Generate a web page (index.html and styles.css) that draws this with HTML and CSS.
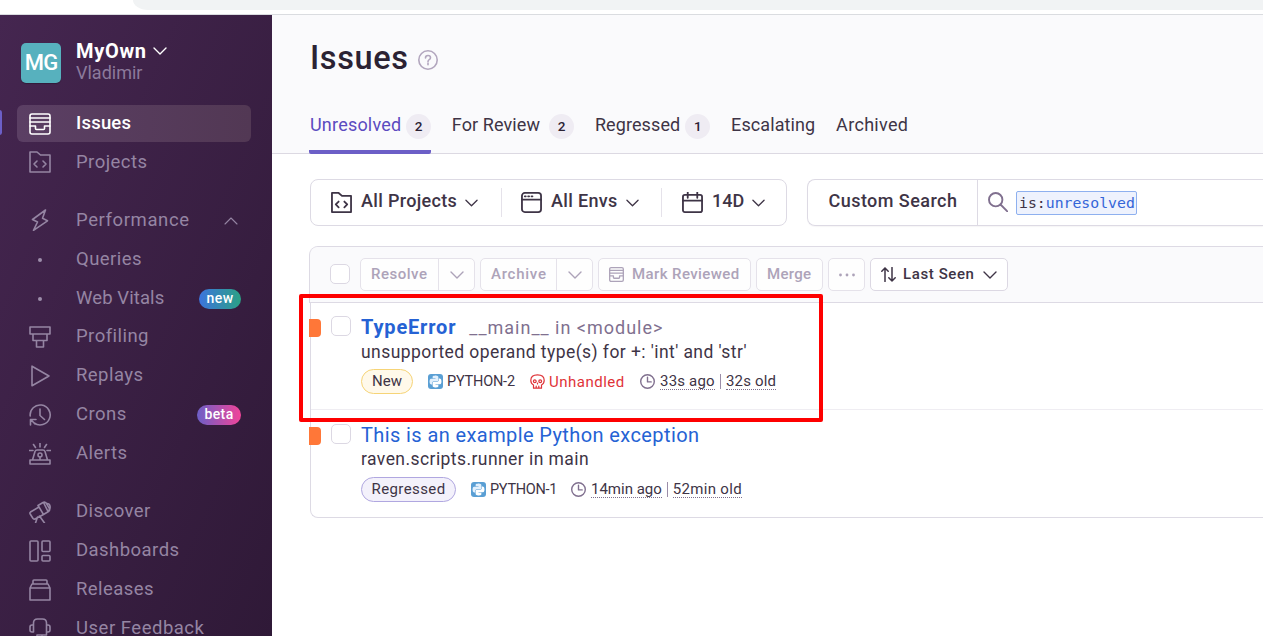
FILE: index.html
```
<!DOCTYPE html>
<html lang="en">
<head>
<meta charset="utf-8">
<title>Issues</title>
<link rel="stylesheet" href="styles.css">
</head>
<body>
<svg class="defs" aria-hidden="true">
  <defs>
    <symbol id="chevron" viewBox="0 0 14 8"><path d="M1 1l6 6 6-6"/></symbol>
    <symbol id="inbox" viewBox="0 0 22 22"><rect x="1" y="1" width="20" height="20" rx="2"/><path d="M1 5h20M1 9h20M1 13h5.500v2.500q0 1 1 1h7q1 0 1-1V13H21"/></symbol>
    <symbol id="code-folder" viewBox="0 0 22 22"><path d="M1 1h7l3.500 3H21v17H1zM8 10l-3 3 3 3M14 10l3 3-3 3"/></symbol>
    <path id="snake" d="M14.25.18l.9.2.73.26.59.3.45.32.34.34.25.34.16.33.1.3.04.26.02.2-.01.13V8.500l-.05.63-.13.55-.21.46-.26.38-.3.31-.33.25-.35.19-.35.14-.33.1-.3.07-.26.04-.21.02H8.770l-.69.05-.59.14-.5.22-.41.27-.33.32-.27.35-.2.36-.15.37-.1.35-.07.32-.04.27-.02.21v3.060H3.170l-.21-.03-.28-.07-.32-.12-.35-.18-.36-.26-.36-.36-.35-.46-.32-.59-.28-.73-.21-.88-.14-1.050-.05-1.230.06-1.220.16-1.040.24-.87.32-.71.36-.57.4-.44.42-.33.42-.24.4-.16.36-.1.32-.05.24-.01h.16l.06.01h8.160v-.83H6.180l-.01-2.750-.02-.37.05-.34.11-.31.17-.28.25-.26.31-.23.38-.2.44-.18.51-.15.58-.12.64-.1.71-.06.77-.04.84-.02 1.270.05z"/>
    <symbol id="python" viewBox="0 0 15 15"><rect width="15" height="15" rx="3" fill="#5a9fd4" stroke="none"/><g transform="translate(1.600 1.600) scale(.492)" stroke="none"><use href="#snake" fill="#e2f0fd"/><use href="#snake" transform="rotate(180 12 12)" fill="#fff"/></g></symbol>
    <symbol id="clock" viewBox="0 0 15 15"><circle cx="7.500" cy="7.500" r="6.800"/><path d="M7.500 3.300v4.600h3.700"/></symbol>
  </defs>
</svg>

<div class="browser-strip"><div class="address-bar"></div></div>

<div class="app">
  <nav class="sidebar">
    <div class="org">
      <div class="avatar">MG</div>
      <div class="org-text">
        <div class="org-name"><span>MyOwn</span><svg class="chev"><use href="#chevron"/></svg></div>
        <div class="org-user">Vladimir</div>
      </div>
    </div>

    <div class="group">
      <a class="item active"><svg class="ic"><use href="#inbox"/></svg><span class="ls-20">Issues</span></a>
      <a class="item"><svg class="ic"><use href="#code-folder"/></svg><span>Projects</span></a>
    </div>
    <div class="group">
      <a class="item"><svg class="ic" viewBox="0 0 22 22"><path d="M16.500 1L3.500 10.500l5 2.500-4 8.300 14-9.500-5-2.500z"/></svg><span class="ls-60">Performance</span><svg class="chev up"><use href="#chevron"/></svg></a>
      <a class="item"><i class="dot"></i><span>Queries</span></a>
      <a class="item"><i class="dot"></i><span class="ls-10">Web Vitals</span><b class="badge new">new</b></a>
      <a class="item"><svg class="ic" viewBox="0 0 22 22"><path d="M1 1h20v7H1zM4 8h14v6.500H4zM7.500 14.500h7V21h-7z"/></svg><span>Profiling</span></a>
      <a class="item"><svg class="ic" viewBox="0 0 22 22"><path d="M3 1.200v19.600L20 11z"/></svg><span>Replays</span></a>
      <a class="item"><svg class="ic" viewBox="0 0 22 22"><path d="M1.200 12a10 10 0 1 1 4 7M1.500 21v-5.500H7M2 15.800L6 20M11 5v6.500l4.500 4"/></svg><span>Crons</span><b class="badge beta">beta</b></a>
      <a class="item"><svg class="ic" viewBox="0 0 22 22"><path d="M1 17h20v4H1zM3.500 17L6 8.500Q6.500 7 8 7h6q1.500 0 2 1.500L18.500 17M11 0v4M4.500 1.500l2 3M17.500 1.500l-2 3M0 7.500h4M18 7.500h4M11 13.500V17"/><circle cx="11" cy="12" r="2"/></svg><span>Alerts</span></a>
    </div>
    <div class="group">
      <a class="item"><svg class="ic" viewBox="0 0 22 22"><path d="M1.500 11L10 6l4.500 7.500-8.500 4.500q-1.500.5-2-.5L1.200 13q-.7-1.200.3-2zM10 6l-1-1.500L14 1.500q2-1 3.300.8l3 5q1 2-.8 3.200L14.500 13.500M14.500 1.500l4.500 9M18 2.500q2.500 0 3 2.500t-1 4M8.500 16L6.500 22M10.500 15l5 7"/></svg><span>Discover</span></a>
      <a class="item"><svg class="ic" viewBox="0 0 22 22"><rect x="1" y="1" width="8" height="20" rx="1"/><rect x="13" y="1" width="8" height="10.500" rx="1"/><rect x="13" y="15.500" width="8" height="5.500" rx="1"/></svg><span>Dashboards</span></a>
      <a class="item"><svg class="ic" viewBox="0 0 22 22"><path d="M1 9h20v12H1zM1 9l2-4h16l2 4M4 5V2q0-1 1-1h12q1 0 1 1v3"/></svg><span>Releases</span></a>
      <a class="item"><svg class="ic" viewBox="0 0 22 22"><path d="M4.500 14V5q0-4 4-4h5q4 0 4 4v9M4.500 7H3Q1 7 1 9v3q0 2 2 2h1.500M17.500 7H19q2 0 2 2v3q0 2-2 2h-1.500zM17.500 14v3h-6M8 17h5v3H8z"/></svg><span class="ls-50">User Feedback</span></a>
    </div>
  </nav>

  <main class="main">
    <header class="page-head">
      <div class="title-row">
        <h1>Issues</h1>
        <svg class="help" viewBox="0 0 20 20"><circle cx="10" cy="10" r="9.200"/><path d="M7.500 8q0-2.500 2.500-2.500T12.500 7.700q0 1.200-1.300 1.900Q10 10.300 10 11.700M10 13.300v1.500"/></svg>
      </div>
      <div class="tabs">
        <a class="tab on"><span class="ls-20">Unresolved</span><b class="count">2</b></a>
        <a class="tab review"><span class="ls-10">For Review</span><b class="count">2</b></a>
        <a class="tab"><span class="ls-10">Regressed</span><b class="count">1</b></a>
        <a class="tab"><span class="ls-10">Escalating</span></a>
        <a class="tab"><span class="ls-30">Archived</span></a>
      </div>
    </header>

    <section class="filters">
      <div class="page-filters">
        <a class="filter projects"><svg class="fi"><use href="#code-folder"/></svg><span>All Projects</span><svg class="chev"><use href="#chevron"/></svg></a>
        <a class="filter envs"><svg class="fi" viewBox="0 0 22 22"><rect x="1" y="1" width="20" height="20" rx="3"/><path d="M1 8h20M4 4.500h1M7.500 4.500h1M11 4.500h1"/></svg><span>All Envs</span><svg class="chev"><use href="#chevron"/></svg></a>
        <a class="filter dates"><svg class="fi" viewBox="0 0 22 22"><rect x="1" y="3" width="20" height="18" rx="2"/><path d="M1 9h20M6 0v6M16 0v6"/></svg><span class="ls-0">14D</span><svg class="chev"><use href="#chevron"/></svg></a>
      </div>
      <div class="search">
        <div class="search-name">Custom Search</div>
        <div class="search-input">
          <svg class="mag" viewBox="0 0 20 20"><circle cx="7.700" cy="7.700" r="6.700"/><path d="M12.500 12.500l7 7"/></svg>
          <code class="token">is:<em>unresolved</em></code>
        </div>
      </div>
    </section>

    <section class="panel">
      <div class="toolbar">
        <i class="check"></i>
        <div class="btn split resolve"><span class="ls-50">Resolve</span><u><svg class="chev"><use href="#chevron"/></svg></u></div>
        <div class="btn split archive"><span class="ls-70">Archive</span><u><svg class="chev"><use href="#chevron"/></svg></u></div>
        <div class="btn mark"><svg class="bi"><use href="#inbox"/></svg><span>Mark Reviewed</span></div>
        <div class="btn merge"><span class="ls-30">Merge</span></div>
        <div class="btn more"><svg viewBox="0 0 16 4"><circle cx="1.500" cy="2" r="1.400"/><circle cx="8" cy="2" r="1.400"/><circle cx="14.500" cy="2" r="1.400"/></svg></div>
        <div class="btn sort"><svg class="arrows" viewBox="0 0 15 15"><path d="M4 14.500V1M.8 4.300L4 1l3.200 3.300M11 .5V14M7.800 10.700L11 14l3.200-3.300"/></svg><span class="ls-60">Last Seen</span><svg class="chev"><use href="#chevron"/></svg></div>
      </div>

      <article class="issue">
        <i class="level"></i><i class="check"></i>
        <div class="body">
          <div class="heading"><strong>TypeError</strong><span class="culprit">__main__ in &lt;module&gt;</span></div>
          <div class="message">unsupported operand type(s) for +: 'int' and 'str'</div>
          <div class="meta">
            <span class="pill fresh">New</span>
            <svg class="mi"><use href="#python"/></svg><span class="short">PYTHON-2</span>
            <svg class="mi skull" viewBox="0 0 15 15"><path d="M3.500 11Q.8 9.500.8 6.500.8.800 7.500.8t6.700 5.700q0 3-2.700 4.500v3.200h-8zM6.200 12v2M8.800 12v2M7.500 9v1"/><circle cx="4.800" cy="7.300" r="1.400"/><circle cx="10.200" cy="7.300" r="1.400"/></svg><span class="unhandled">Unhandled</span>
            <svg class="mi"><use href="#clock"/></svg><span class="time ls-20">33s ago</span><i class="bar"></i><span class="time ls-20">32s old</span>
          </div>
        </div>
      </article>

      <article class="issue second">
        <i class="level"></i><i class="check"></i>
        <div class="body">
          <div class="heading">This is an example Python exception</div>
          <div class="message">raven.scripts.runner in main</div>
          <div class="meta">
            <span class="pill regressed">Regressed</span>
            <svg class="mi"><use href="#python"/></svg><span class="short">PYTHON-1</span>
            <svg class="mi"><use href="#clock"/></svg><span class="time ls-0">14min ago</span><i class="bar"></i><span class="time ls-30">52min old</span>
          </div>
        </div>
      </article>
      <div class="highlight"></div>
    </section>
  </main>
</div>
</body>
</html>
```
FILE: styles.css
```
* { box-sizing: border-box; }
body { margin: 0; height: 636px; overflow: hidden; background: #fff; color: #3e3446; font-family: Roboto, "Liberation Sans", sans-serif; }
svg { display: block; flex: none; fill: none; stroke: currentColor; stroke-width: 1.6; stroke-linecap: round; stroke-linejoin: round; }
i, em { font-style: normal; }
u { text-decoration: none; }
.defs { position: absolute; width: 0; height: 0; }
.chev { width: 14px; height: 8px; stroke-width: 1.4; }

/* letter-spacing steps */
.ls-0 { letter-spacing: 0 !important; }
.ls-10 { letter-spacing: .1px !important; }
.ls-20 { letter-spacing: .2px !important; }
.ls-30 { letter-spacing: .31px !important; }
.ls-50 { letter-spacing: .51px !important; }
.ls-60 { letter-spacing: .6px !important; }
.ls-70 { letter-spacing: .75px !important; }

.browser-strip { height: 15px; border-bottom: 1px solid #dadce0; padding-left: 133px; }
.address-bar { height: 10px; background: #f1f3f4; border-bottom-left-radius: 18px 12px; }

.app { display: flex; height: 621px; }

/* sidebar */
.sidebar { flex: none; width: 272px; padding-top: 28px; overflow: hidden; background: linear-gradient(294deg, #2f1937 0%, #452650 100%); color: #9585a3; }
.org { display: flex; height: 62px; padding-left: 21px; }
.avatar { width: 40px; height: 40px; border-radius: 5px; background: #57b1be; color: #fff; font-size: 22px; font-weight: 500; line-height: 40px; text-align: center; letter-spacing: -.8px; box-shadow: 0 1px 1px rgba(0,0,0,.25); }
.org-text { margin: -1px 0 0 15px; }
.org-name { display: flex; align-items: center; height: 18px; font-size: 20px; font-weight: 700; letter-spacing: .68px; color: #fff; }
.org-name .chev { margin-left: 6px; margin-top: -1px; }
.org-user { margin-top: 3px; font-size: 18px; line-height: 20px; color: #8b7a9b; }
.group { margin-bottom: 21.100px; }
.item { position: relative; display: flex; align-items: center; height: 37px; margin: 0 21px 1.900px 17px; padding: 0 10px 0 12px; border-radius: 6px; font-size: 18.500px; letter-spacing: .45px; }
.item > span { margin-left: 25px; margin-top: -1.500px; }
.item .ic { width: 22px; height: 22px; }
.item.active { background: linear-gradient(90deg, #5b3f64, #523854); color: #fff; }
.item.active > span { font-weight: 500; }
.item.active::before { content: ""; position: absolute; left: -20px; top: 5px; width: 5px; height: 25px; border-radius: 3px; background: #6c5fc7; }
.item .up { margin: 2px 3px 0 auto; transform: rotate(180deg); stroke-width: 1.1; }
.dot { width: 4px; height: 4px; margin: 1px 9px 0; border-radius: 50%; background: #9d8eab; }
.badge { margin: 1px 0 0 auto; height: 20px; border-radius: 10px; color: #fff; font-size: 14px; font-weight: 500; line-height: 19px; text-align: center; letter-spacing: .4px; }
.badge.new { width: 42px; background: linear-gradient(90deg, #3c74dd, #2ba185); }
.badge.beta { width: 44px; background: linear-gradient(90deg, #6c5fc7, #f14499); }

/* page header */
.main { flex: 1; min-width: 0; }
.page-head { height: 139px; padding: 22px 0 0 38px; background: #fafafc; border-bottom: 1px solid #dcd9e2; }
.title-row { display: flex; align-items: center; height: 42px; }
h1 { margin: 0; font-size: 32.500px; font-weight: 500; line-height: 42px; letter-spacing: .6px; color: #2b2233; }
.help { width: 20px; height: 20px; margin: 3px 0 0 10px; color: #b2a6be; }
.tabs { display: flex; gap: 19.800px; margin: 24px 0 0 -1px; height: 51px; font-size: 18px; }
.tab { display: flex; align-items: flex-start; height: 51px; line-height: 44px; padding-left: 1px; }
.tab.on { width: 122px; color: #5b4bc0; border-bottom: 4px solid #6c5fc7; border-radius: 0 0 2px 2px; }
.count { width: 25px; height: 25px; margin: 11px 0 0 5px; border-radius: 50%; background: #efecf3; color: #2b2233; font-size: 13.500px; font-weight: 500; line-height: 25px; text-align: center; }
.review .count { margin-left: 9px; }

/* filters */
.filters { display: flex; gap: 20px; height: 92px; padding: 25px 0 0 38px; }
.page-filters { display: flex; width: 477px; height: 47px; padding: 8px 0; border: 1px solid #dddae4; border-radius: 8px; }
.filter { display: flex; align-items: center; padding-left: 19px; font-size: 18px; font-weight: 500; letter-spacing: .33px; }
.filter + .filter { border-left: 1px solid #e5e2ea; }
.filter span { margin: -4px 8px 0 9px; }
.filter .chev { width: 13px; }
.fi { width: 21px; height: 21px; margin-top: -1px; stroke-width: 1.9; }
.projects { width: 190px; padding-left: 20px; }
.envs { width: 160px; }
.dates { padding-left: 20px; }
.search { display: flex; flex: 1; height: 47px; border: 1px solid #dddae4; border-right: 0; border-radius: 8px 0 0 8px; box-shadow: 0 1px 1px rgba(43,34,51,.04); }
.search-name { width: 170px; padding-left: 20.500px; border-right: 1px solid #dddae4; font-size: 18px; font-weight: 500; line-height: 42px; letter-spacing: .45px; }
.search-input { display: flex; align-items: center; padding-left: 10px; }
.mag { width: 20px; height: 20px; margin-top: -1px; color: #80708f; stroke-width: 1.900; }
.token { width: 121px; height: 24px; margin: 1px 0 0 8px; border: 1px solid #8eb0ef; border-radius: 2px; background: #eef2fd; padding-left: 2px; font: 14.800px/22px "DejaVu Sans Mono", monospace; white-space: pre; }
.token em { color: #3465d8; }

/* issue list */
.panel { position: relative; height: 272px; margin-left: 38px; border: 1px solid #dddae4; border-right: 0; border-radius: 8px 0 0 8px; }
.toolbar { display: flex; align-items: center; gap: 5px; height: 56px; margin-left: -2px; padding-left: 20px; background: #fafafc; border: solid #dddae4; border-width: 0 0 1px 1px; border-top-left-radius: 8px; }
.check { flex: none; width: 20px; height: 20px; border: 1px solid #dcd8e3; border-radius: 5px; background: #fff; }
.toolbar .check { margin-top: -1px; }
.btn { display: flex; align-items: center; flex: none; height: 33px; border: 1px solid #e5e2ea; border-radius: 5px; background: #fefefe; color: #ada3b9; font-size: 15px; font-weight: 500; letter-spacing: .4px; padding-left: 10px; }
.btn span { margin-top: -1px; }
.split u { display: flex; align-items: center; justify-content: center; width: 36px; height: 31px; margin-left: auto; border-left: 1px solid #e5e2ea; }
.resolve { width: 115px; margin-left: 5px; }
.archive { width: 113px; }
.mark { width: 153px; }
.bi { width: 15px; height: 15px; margin-right: 8px; stroke-width: 1.900; }
.merge { width: 67px; }
.more { width: 37px; padding: 0; justify-content: center; }
.more svg { width: 16px; height: 4px; fill: currentColor; stroke: none; }
.sort { width: 138px; border-color: #dcd8e3; background: #fff; color: #3e3446; }
.arrows { width: 15px; height: 15px; margin-right: 7px; stroke-width: 1.500; }
.sort .chev { margin-left: 8px; }
.issue { display: flex; height: 107px; border-bottom: 1px solid #efedf2; }
.issue.second { height: 107px; margin-top: 1px; border: 0; }
.level { width: 12px; height: 18px; margin: 16px 10px 0 -2px; border-radius: 0 4px 4px 0; background: #ff7738; }
.issue .check { margin-top: 13px; }
.body { padding: 11px 0 0 10px; }
.heading { display: flex; align-items: center; height: 26px; padding-bottom: 1px; font-size: 20px; line-height: 24px; letter-spacing: .4px; color: #2562d4; }
.heading strong { letter-spacing: .82px; }
.culprit { margin: 2px 0 0 13px; font-size: 18px; letter-spacing: .99px; color: #80708f; }
.message { height: 25px; font-size: 17.500px; line-height: 24px; letter-spacing: .43px; color: #3e3446; white-space: pre; }
.second .message { line-height: 22px; }
.meta { display: flex; align-items: center; height: 25px; margin-top: 4px; font-size: 15px; letter-spacing: .4px; white-space: nowrap; }
.pill { height: 25px; margin-right: 15px; border: 1px solid; border-radius: 13px; line-height: 22px; text-align: center; }
.pill.fresh { width: 52px; border-color: #f6d477; background: #fff9ea; letter-spacing: 0; }
.pill.regressed { width: 95px; border-color: #b0a7e0; background: #f3f1fb; }
.mi { width: 15px; height: 15px; color: #80708f; stroke-width: 1.400; }
.short { width: 68px; margin: 0 15px 0 4px; font-size: 14.500px; letter-spacing: -.2px; }
.second .short { width: 66px; letter-spacing: -.3px; }
.skull, .unhandled { color: #df3338; }
.skull { stroke-width: 1.2; }
.unhandled { margin: 0 15px 0 4px; width: 76px; letter-spacing: .5px; }
.time { margin-left: 5px; line-height: 16px; border-bottom: 1px dotted #7d6f8c; }
.bar { width: 1px; height: 15px; margin-left: 5px; background: #9b8da8; }
.highlight { position: absolute; left: -12px; top: 47px; width: 524px; height: 128px; border: 4px solid #fe0000; border-radius: 2px; }
```
